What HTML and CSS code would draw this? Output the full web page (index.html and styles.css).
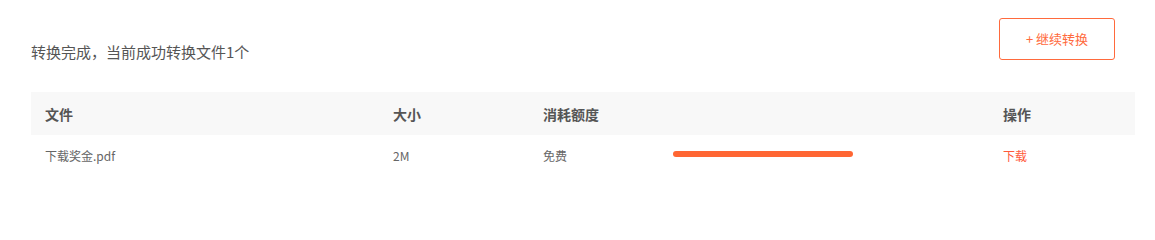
FILE: index.html
```html
<!DOCTYPE html>
<html lang="zh-CN">
<head>
<meta charset="utf-8">
<title>转换完成</title>
<link rel="stylesheet" href="styles.css">
</head>
<body>
<div class="page">
  <div class="top">
    <div class="title">转换完成，当前成功转换文件1个</div>
    <button class="btn">+ 继续转换</button>
  </div>
  <div class="table">
    <div class="row head">
      <div class="cell">文件</div>
      <div class="cell">大小</div>
      <div class="cell">消耗额度</div>
      <div class="cell"></div>
      <div class="cell">操作</div>
    </div>
    <div class="row body">
      <div class="cell">下载奖金.pdf</div>
      <div class="cell">2M</div>
      <div class="cell">免费</div>
      <div class="cell"><div class="bar"></div></div>
      <div class="cell"><a class="link" href="#">下载</a></div>
    </div>
  </div>
</div>
</body>
</html>
```

FILE: styles.css
```css
html, body {
  margin: 0;
  padding: 0;
  background: #ffffff;
}
body {
  font-family: "Noto Sans CJK SC", "Noto Sans", sans-serif;
  color: #555;
}
.page {
  padding: 18px 20px 0 31px;
}
.top {
  display: flex;
  justify-content: space-between;
  align-items: flex-start;
  padding-right: 20px;
  height: 41px;
}
.title {
  margin-top: 24px;
  font-size: 15px;
  line-height: 20px;
  color: #555;
}
.btn {
  width: 116px;
  height: 42px;
  box-sizing: border-box;
  border: 1px solid #ff6a3d;
  border-radius: 3px;
  background: #fff;
  color: #ff6a3d;
  font-family: inherit;
  font-size: 13px;
  line-height: 16px;
  padding: 0;
  cursor: pointer;
}
.table {
  margin-top: 33px;
}
.row {
  display: grid;
  grid-template-columns: 348px 150px 130px 330px 1fr;
  align-items: center;
}
.head {
  height: 43px;
  background: #f8f8f8;
}
.head .cell {
  font-size: 14px;
  font-weight: bold;
  color: #555;
  line-height: 20px;
}
.body {
  height: 42px;
}
.body .cell {
  font-size: 12px;
  line-height: 16px;
  color: #666;
}
.cell {
  padding-left: 14px;
}
.bar {
  width: 180px;
  height: 6px;
  border-radius: 3px;
  background: #ff6633;
  margin-bottom: 4px;
}
.link {
  color: #ff5a3c;
  text-decoration: none;
}
```
